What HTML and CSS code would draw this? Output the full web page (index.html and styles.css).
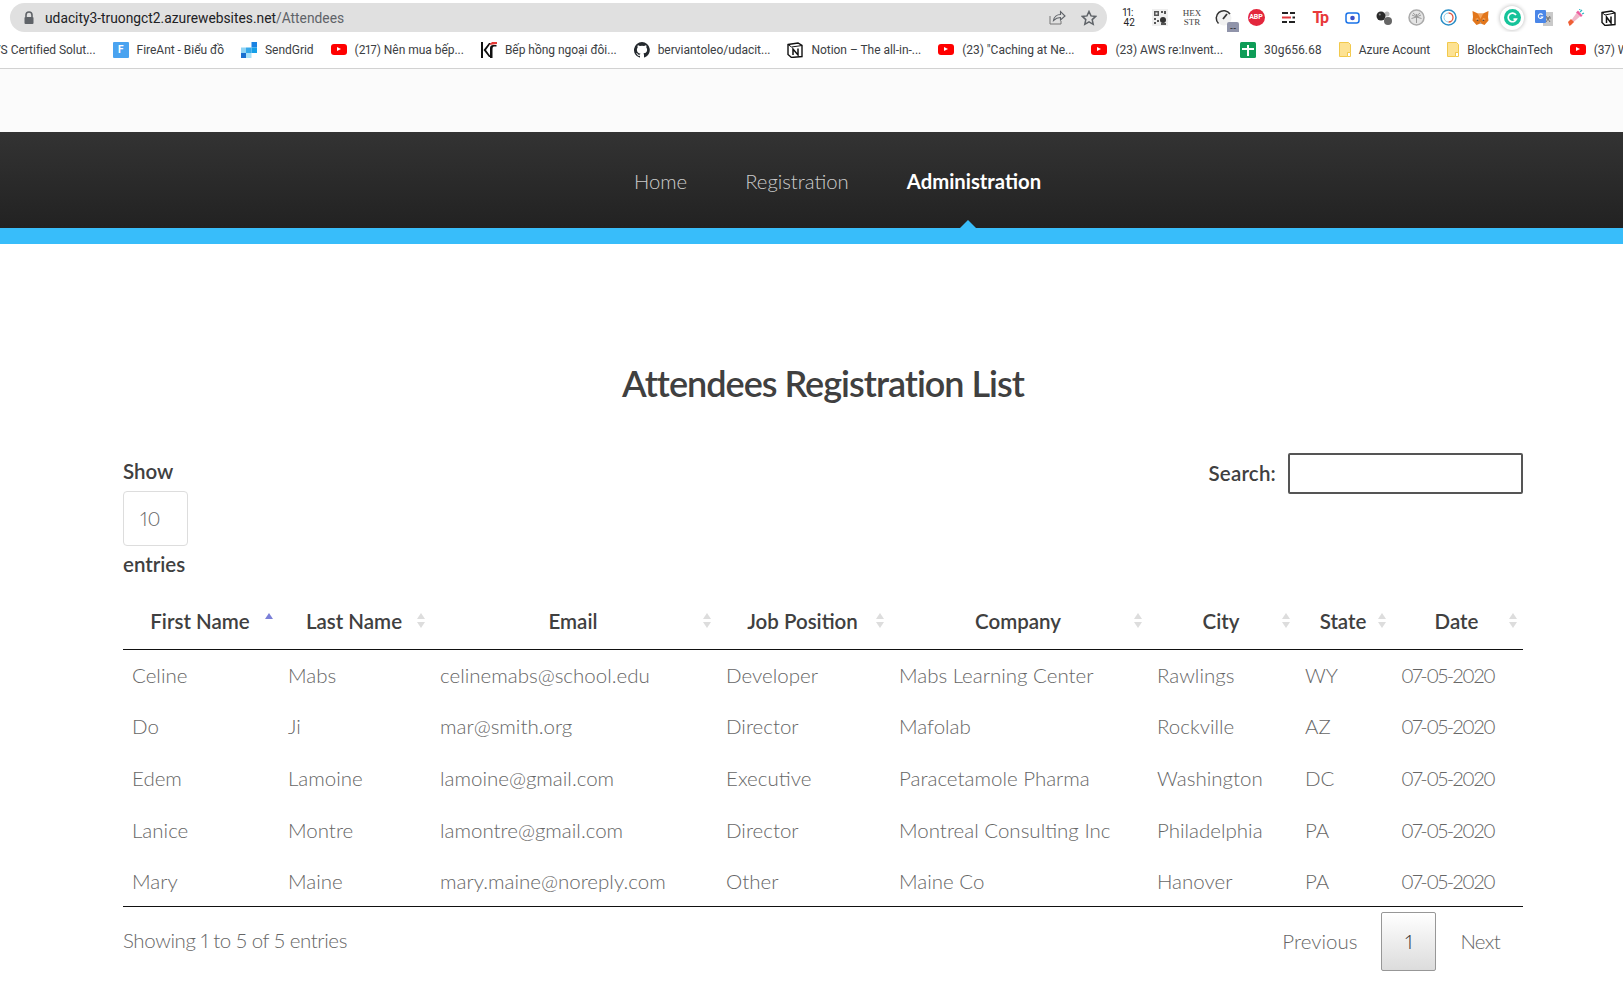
FILE: index.html
```html
<!DOCTYPE html>
<html lang="en">
<head>
    <meta charset="UTF-8">
    <title>Attendees</title>
    <link rel="stylesheet" href="styles.css">
</head>
<body>

    <div class="address-row">
        <div class="address-bar">
            <svg class="lock" width="12" height="14" viewBox="0 0 12 14"><path d="M3 6V4a3 3 0 0 1 6 0v2" fill="none" stroke="#5f6368" stroke-width="1.6"/><rect x="1.5" y="6" width="9" height="7" rx="1" fill="#5f6368"/></svg>
            <span class="url">udacity3-truongct2.azurewebsites.net<span class="url-path">/Attendees</span></span>
            <svg class="bar-icon" width="17" height="15" viewBox="0 0 17 15"><path d="M1 6v8h11v-3" fill="none" stroke="#777" stroke-width="1"/><path d="M4.500 10.500c.5-3.500 3.500-6 7-6V1.500l4.500 4.500-4.500 4V7.500c-3 0-5 1-7 3z" fill="none" stroke="#5f6368" stroke-width="1.100"/></svg>
            <svg class="bar-icon" width="16" height="16" viewBox="0 0 16 16"><path d="M8 1.500l2 4.400 4.700.5-3.500 3.200 1 4.700L8 11.900l-4.200 2.400 1-4.700-3.500-3.200 4.700-.5z" fill="none" stroke="#5f6368" stroke-width="1.500"/></svg>
        </div>
        <div class="extensions">
            <span class="ext-clock">11:<br>&nbsp;42</span>
            <svg width="16" height="17" viewBox="0 0 16 17"><rect width="16" height="17" fill="#efefef"/><path d="M2 2h5v5H2zM3.500 3.500v2h2v-2zM9 2h2v2H9zM12 2h2v3h-2zM2 9h2v2H2zM5 11h2v2H5zM2 13h2v2H2z" fill="#555" fill-rule="evenodd"/><circle cx="11" cy="11" r="3" fill="#333"/><path d="M9 14h5v2H9z" fill="#555"/></svg>
            <span class="ext-hex">HEX<br>STR</span>
            <span class="ext-gauge">
                <svg width="18" height="18" viewBox="0 0 18 18"><circle cx="9" cy="9" r="7.500" fill="#f1f1f1"/><path d="M3.500 14.500A7.500 7.500 0 1 1 15 5" fill="none" stroke="#333" stroke-width="1.500"/><path d="M8 10l4-5" stroke="#333" stroke-width="1.800"/></svg>
                <span class="gauge-badge">--</span>
            </span>
            <span class="ext-abp">ABP</span>
            <svg width="13" height="11" viewBox="0 0 13 11"><path d="M0 1h6M8 1h5M0 10h5M7 10h6" stroke="#222" stroke-width="2"/><path d="M0 5.500h9" stroke="#e0383e" stroke-width="2"/><path d="M10.500 5.500H13" stroke="#222" stroke-width="2"/></svg>
            <span class="ext-tp">Tp</span>
            <svg width="15" height="12" viewBox="0 0 15 12"><rect x="1" y="1" width="13" height="10" rx="2.500" fill="none" stroke="#1a73e8" stroke-width="1.500"/><circle cx="7.500" cy="6" r="2.300" fill="#3b50c8"/></svg>
            <svg width="16" height="16" viewBox="0 0 16 16"><circle cx="11" cy="4" r="2.500" fill="#bbb"/><circle cx="12" cy="11" r="4" fill="#666"/><circle cx="5" cy="6" r="4.500" fill="#2a2a2a"/><circle cx="3.800" cy="4.500" r="1" fill="#888"/></svg>
            <svg width="17" height="17" viewBox="0 0 17 17"><circle cx="8.500" cy="8.500" r="7.500" fill="#e4e4e4" stroke="#aaa" stroke-width="1.500"/><path d="M8.500 5v9M4 6l4.500 2L13 6M3.500 9.500l5-1.500 5 1.500M5 4l3.500 3L12 4" fill="none" stroke="#999"/></svg>
            <svg width="17" height="17" viewBox="0 0 17 17"><circle cx="8.500" cy="8.500" r="7.500" fill="none" stroke="#2a8fc7" stroke-width="1.500"/><path d="M8.500 4a4.500 4.500 0 0 1 0 9" fill="none" stroke="#e0533d" stroke-width="1.300"/><path d="M8.500 13a4.500 4.500 0 0 1 0-9" fill="none" stroke="#8ccbea" stroke-width="1"/></svg>
            <svg width="17" height="16" viewBox="0 0 17 16"><path d="M.5 1L6 3.500h5L16.500 1 16 7l.5 3.500L12.500 15l-2.500-1H7l-2.500 1L.5 10.500 1 7z" fill="#e2761b"/><path d="M6 4h5L8.500 9zM3 9l3-1 1 3zM14 9l-3-1-1 3z" fill="#f6a45a"/><path d="M6 9.500L4.500 10.500 6.500 11zM11 9.500l1.500 1-2 .5z" fill="#233447"/><path d="M7 14l1.500-2 1.500 2z" fill="#c0ad9e"/></svg>
            <span class="ext-grammarly">
                <svg width="17" height="17" viewBox="0 0 17 17"><circle cx="8.500" cy="8.500" r="8.500" fill="#15c39a"/><path d="M12 6a4.300 4.300 0 1 0 .4 4.200H9.500" fill="none" stroke="#fff" stroke-width="1.700"/></svg>
            </span>
            <svg width="18" height="18" viewBox="0 0 18 18"><path d="M8 3h10v14H8z" fill="#c9c9c9"/><path d="M11 7l4 6M15 7l-4 6M10 9h6" stroke="#777"/><rect y="1" width="11" height="13" rx="1" fill="#4a86e8"/><path d="M7.500 5.800a2.300 2.300 0 1 0 .3 2.200H5.500" fill="none" stroke="#fff" stroke-width="1.100"/></svg>
            <svg width="18" height="18" viewBox="0 0 18 18"><path d="M2 15l4-1.500 7-6-3.500-3.500-5 7z" fill="#f0b7c9"/><path d="M1 13l3-3 3 3-3 3-1.500 1z" fill="#ef5f35"/><path d="M9 3.500l5 4.500 1.500-1.500L11 1.500z" fill="#ee5f9f"/><path d="M13 3l2-2M15 5l2-1M12.500 1l.5-1" stroke="#2fb7c4" stroke-width="1.300"/></svg>
            <svg width="15" height="16" viewBox="0 0 15 16"><path d="M1 2.500L10.500 1 14 3v11.500L4 15.500 1 12.500z" fill="#fff" stroke="#111" stroke-width="1.400"/><path d="M1 2.500l3 2.500 10-2" fill="none" stroke="#111"/><path d="M5.500 13V7l4.500 6V6.500" fill="none" stroke="#111" stroke-width="1.500"/></svg>
        </div>
    </div>

    <div class="bookmarks">
        <span class="bookmark cut-first">VS Certified Solut...</span>
        <span class="bookmark"><span class="bm-fireant">F</span>FireAnt - Biểu đồ</span>
        <span class="bookmark"><svg width="16" height="16" viewBox="0 0 16 16"><path d="M10.500 0H16v5.500h-5.500z" fill="#1a82e2"/><path d="M5 5.500h5.500V11H5z" fill="#35a8ea"/><path d="M10.500 5.500H16V11h-5.500z" fill="#16a0e8"/><path d="M0 5.500h5V11H0z" fill="#8fd3f4"/><path d="M0 11h5v5H0z" fill="#1a6fd0"/><path d="M5 11h5.500v5H5z" fill="#a8e0f7"/></svg>SendGrid</span>
        <span class="bookmark"><span class="bm-youtube"></span>(217) Nên mua bếp...</span>
        <span class="bookmark"><svg width="16" height="16" viewBox="0 0 16 16"><path d="M0 0h2v16H0z" fill="#111"/><path d="M2.500 8L8 1h2L5 8l5 7H8z" fill="#111"/><path d="M9 6c0-2 1.500-3 3-3h3.500v1.500H13c-1 0-1.500 1-1.500 2.500v9H9z" fill="#111"/><path d="M8 3l3-3h5v2l-4 .5z" fill="#e53935"/></svg>Bếp hồng ngoại đôi...</span>
        <span class="bookmark"><svg width="16" height="16" viewBox="0 0 16 16"><path d="M8 0a8 8 0 0 0-2.500 15.600c.4.100.5-.2.500-.4v-1.400c-2.200.5-2.700-1-2.700-1-.4-.9-.9-1.200-.9-1.200-.7-.5.100-.5.100-.5.800.1 1.200.8 1.200.8.700 1.200 1.900.9 2.300.7.100-.5.300-.9.500-1.100-1.800-.2-3.600-.9-3.600-4 0-.9.300-1.600.8-2.100-.1-.2-.4-1 .1-2.100 0 0 .7-.2 2.200.8a7.500 7.500 0 0 1 4 0c1.500-1 2.200-.8 2.200-.8.400 1.100.2 1.900.1 2.100.5.600.8 1.300.8 2.100 0 3.100-1.900 3.700-3.700 3.900.3.300.6.800.6 1.500v2.200c0 .2.100.5.600.4A8 8 0 0 0 8 0z" fill="#24292e"/></svg>berviantoleo/udacit...</span>
        <span class="bookmark"><svg width="16" height="16" viewBox="0 0 16 16"><path d="M1 2.500L11 1l4 2.500v11L4.500 15.500 1 12.500z" fill="#fff" stroke="#111" stroke-width="1.400"/><path d="M1 2.500l3.500 2.500L15 3.500" fill="none" stroke="#111"/><path d="M6 13V7l5 6V6.500" fill="none" stroke="#111" stroke-width="1.500"/></svg>Notion – The all-in-...</span>
        <span class="bookmark"><span class="bm-youtube"></span>(23) "Caching at Ne...</span>
        <span class="bookmark"><span class="bm-youtube"></span>(23) AWS re:Invent...</span>
        <span class="bookmark"><svg width="16" height="16" viewBox="0 0 16 16"><rect width="16" height="16" rx="1.500" fill="#0f9d58"/><path d="M7 3h2v3h5v2H9v6H7V8H2V6h5z" fill="#fff"/></svg>30g656.68</span>
        <span class="bookmark"><svg class="bm-file" width="12" height="15" viewBox="0 0 12 15"><path d="M.5.500h9l2 2v8h-3v4H.5z" fill="#fde293" stroke="#f2c94c"/><path d="M8.500 10.500h3v4h-3z" fill="#fff" stroke="#f2c94c"/></svg>Azure Acount</span>
        <span class="bookmark"><svg class="bm-file" width="12" height="15" viewBox="0 0 12 15"><path d="M.5.500h9l2 2v8h-3v4H.5z" fill="#fde293" stroke="#f2c94c"/><path d="M8.500 10.500h3v4h-3z" fill="#fff" stroke="#f2c94c"/></svg>BlockChainTech</span>
        <span class="bookmark"><span class="bm-youtube"></span>(37) W</span>
    </div>

    <div class="top-band"></div>

    <nav class="main-nav">
        <a href="#">Home</a>
        <a href="#">Registration</a>
        <a href="#" class="active">Administration</a>
    </nav>
    <div class="nav-stripe"></div>

    <main class="content">
        <h1>Attendees Registration List</h1>

        <div class="table-tools">
            <div class="length-box">
                <div>Show</div>
                <div class="length-select">10</div>
                <div>entries</div>
            </div>
            <div class="search-box">
                <label for="search">Search:</label>
                <input id="search" type="text">
            </div>
        </div>

        <table class="attendees">
            <colgroup>
                <col class="c-first"><col class="c-last"><col class="c-email"><col class="c-job">
                <col class="c-company"><col class="c-city"><col class="c-state"><col class="c-date">
            </colgroup>
            <thead>
                <tr>
                    <th class="sorted">First Name</th>
                    <th>Last Name</th>
                    <th>Email</th>
                    <th>Job Position</th>
                    <th>Company</th>
                    <th>City</th>
                    <th>State</th>
                    <th>Date</th>
                </tr>
            </thead>
            <tbody>
                <tr><td>Celine</td><td>Mabs</td><td>celinemabs@school.edu</td><td>Developer</td><td>Mabs Learning Center</td><td>Rawlings</td><td>WY</td><td class="date">07-05-2020</td></tr>
                <tr><td>Do</td><td>Ji</td><td>mar@smith.org</td><td>Director</td><td>Mafolab</td><td>Rockville</td><td>AZ</td><td class="date">07-05-2020</td></tr>
                <tr><td>Edem</td><td>Lamoine</td><td>lamoine@gmail.com</td><td>Executive</td><td>Paracetamole Pharma</td><td>Washington</td><td>DC</td><td class="date">07-05-2020</td></tr>
                <tr><td>Lanice</td><td>Montre</td><td>lamontre@gmail.com</td><td>Director</td><td>Montreal Consulting Inc</td><td>Philadelphia</td><td>PA</td><td class="date">07-05-2020</td></tr>
                <tr><td>Mary</td><td>Maine</td><td>mary.maine@noreply.com</td><td>Other</td><td>Maine Co</td><td>Hanover</td><td>PA</td><td class="date">07-05-2020</td></tr>
            </tbody>
        </table>

        <div class="table-footer">
            <div class="table-info">Showing 1 to 5 of 5 entries</div>
            <div class="pager">
                <a href="#">Previous</a>
                <a href="#" class="current">1</a>
                <a href="#" class="next">Next</a>
            </div>
        </div>
    </main>

</body>
</html>
```

FILE: styles.css
```css
* {
    box-sizing: border-box;
}

body {
    margin: 0;
    font-family: 'Lato', sans-serif;
    font-variant-numeric: proportional-nums;
    background-color: white;
    color: #666;
    overflow: hidden;
}

/* Browser chrome */
.address-row {
    height: 35px;
    padding-top: 3px;
    display: flex;
}

.address-bar {
    width: 1097px;
    height: 29px;
    margin-left: 10px;
    padding: 0 10px 0 13px;
    border-radius: 15px;
    background-color: #e0e0e0;
    display: flex;
    align-items: center;
    gap: 15px;
    font-family: 'Roboto', sans-serif;
    font-size: 13.8px;
    color: #202124;
}

.url {
    flex: 1;
    margin-left: -5px;
}

.url-path {
    color: #5f6368;
}

.extensions {
    flex: 1;
    height: 29px;
    padding-left: 5px;
    display: grid;
    grid-template-columns: repeat(16, 32px);
    justify-items: center;
    align-items: center;
    overflow: hidden;
}

.ext-clock,
.ext-hex {
    font-family: 'Liberation Serif', serif;
    font-size: 9px;
    line-height: 9px;
    text-align: center;
    color: #444;
}

.ext-clock {
    font-family: 'Roboto', sans-serif;
    font-size: 10px;
    line-height: 10px;
    color: #222;
}

.ext-gauge {
    position: relative;
    display: flex;
}

.gauge-badge {
    position: absolute;
    right: -6px;
    bottom: -7px;
    width: 12px;
    height: 12px;
    background-color: #9094aa;
    border-radius: 2px;
    color: #222;
    font-size: 9px;
    line-height: 11px;
    text-align: center;
}

.ext-abp {
    width: 17px;
    height: 17px;
    border-radius: 50%;
    background-color: #e3263c;
    color: white;
    font: bold 7px/17px 'Roboto', sans-serif;
    text-align: center;
}

.ext-tp {
    color: #e83a3a;
    font: bold 16px/16px 'Roboto', sans-serif;
    letter-spacing: -1.500px;
}

.ext-grammarly {
    width: 24px;
    height: 24px;
    display: flex;
    align-items: center;
    justify-content: center;
    background-color: white;
    border-radius: 50%;
    box-shadow: 0 0 4px rgba(0, 0, 0, 0.3);
}

.bookmarks {
    height: 34px;
    padding-bottom: 4px;
    border-bottom: 1px solid #d2d2d2;
    display: flex;
    align-items: center;
    gap: 17px;
    overflow: hidden;
    white-space: nowrap;
    font-family: 'Roboto', sans-serif;
    font-size: 12px;
    letter-spacing: -0.03px;
    color: #3c4043;
}

.bookmark {
    display: flex;
    align-items: center;
    gap: 8px;
    flex-shrink: 0;
}

.cut-first {
    margin-left: -7px;
}

.bm-fireant {
    width: 16px;
    height: 16px;
    border-radius: 1px;
    background-color: #4aa3f0;
    color: white;
    font-weight: bold;
    font-size: 10px;
    line-height: 16px;
    text-align: center;
}

.bm-youtube {
    width: 16px;
    height: 11px;
    border-radius: 3px;
    background-color: #f00;
    position: relative;
}

.bm-youtube::after {
    content: '';
    position: absolute;
    left: 6px;
    top: 3px;
    border-left: 4px solid white;
    border-top: 2.500px solid transparent;
    border-bottom: 2.500px solid transparent;
}

/* Site header */
.top-band {
    height: 63px;
    background-color: #fbfbfb;
}

.main-nav {
    height: 96px;
    background-image: linear-gradient(#333, #222);
    display: flex;
    justify-content: center;
    align-items: center;
    gap: 58px;
    font-size: 20.300px;
    padding: 2px 0 0 52px;
}

.main-nav a {
    position: relative;
    color: #ccc;
    font-weight: 300;
    text-decoration: none;
}

.main-nav a.active {
    color: white;
    font-weight: 700;
}

.main-nav a.active::after {
    content: '';
    position: absolute;
    left: 50%;
    bottom: -35px;
    margin-left: -14px;
    border-left: 8px solid transparent;
    border-right: 8px solid transparent;
    border-bottom: 8px solid #38bdfa;
}

.nav-stripe {
    height: 16px;
    background-color: #38bdfa;
}

/* Page content */
.content {
    padding: 0 100px 0 123px;
}

h1 {
    margin: 115px 0 47px;
    text-align: center;
    font-size: 36px;
    line-height: 48px;
    font-weight: 600;
    letter-spacing: -1px;
    color: #404040;
}

.table-tools {
    display: flex;
    justify-content: space-between;
    align-items: flex-start;
    height: 139px;
    font-size: 20.500px;
    font-weight: 600;
    color: #404040;
}

.length-box {
    line-height: 34px;
}

.length-select {
    width: 65px;
    height: 55px;
    margin: 3px 0 1px;
    border: 1px solid #ddd;
    border-radius: 4px;
    padding-left: 16px;
    font-size: 20px;
    line-height: 53px;
    font-weight: 300;
    color: #666;
}

.search-box {
    display: flex;
    align-items: center;
    gap: 12px;
    margin-top: -1px;
}

.search-box label {
    margin-bottom: 1px;
    letter-spacing: 0.2px;
}

.search-box input {
    width: 235px;
    height: 41px;
    border: 2px solid #555;
    border-radius: 2px;
    background-color: white;
}

/* Table */
.attendees {
    width: 1400px;
    table-layout: fixed;
    border-collapse: collapse;
    border-bottom: 1.500px solid #111;
    font-size: 20.500px;
}

.c-first { width: 156px; }
.c-last { width: 152px; }
.c-email { width: 286px; }
.c-job { width: 173px; }
.c-company { width: 258px; }
.c-city { width: 148px; }
.c-state { width: 96px; }
.c-date { width: 131px; }

.attendees th {
    height: 56px;
    padding: 0 12px 0 10px;
    border-bottom: 1.500px solid #111;
    color: #404040;
    font-weight: 600;
    text-align: center;
    position: relative;
}

.attendees th::before,
.attendees th::after {
    content: '';
    position: absolute;
    right: 6px;
    border-left: 4px solid transparent;
    border-right: 4px solid transparent;
}

.attendees th::before {
    top: 20px;
    border-bottom: 6px solid #ddd;
}

.attendees th::after {
    top: 29px;
    border-top: 6px solid #ddd;
}

.attendees th.sorted::before {
    border-bottom-color: #7b80d8;
}

.attendees th.sorted::after {
    display: none;
}

.attendees td {
    height: 51.600px;
    padding: 0 9px;
    font-weight: 300;
    white-space: nowrap;
}

.attendees td.date {
    font-size: 20px;
    letter-spacing: -1.600px;
}

.table-footer {
    display: flex;
    justify-content: space-between;
    align-items: flex-start;
    padding-top: 5px;
    font-size: 20.500px;
    font-weight: 300;
}

.table-info {
    padding-top: 16px;
    letter-spacing: -0.400px;
}

.pager {
    display: flex;
    align-items: center;
}

.pager a {
    padding: 0 24px 2px;
    color: #666;
    text-decoration: none;
}

.pager a.next {
    padding: 0 23px 2px 24px;
    letter-spacing: -0.700px;
}

.pager a.current {
    width: 55px;
    height: 59px;
    padding: 0;
    border: 1px solid #979797;
    border-radius: 2px;
    background-image: linear-gradient(white, #dcdcdc);
    color: #333;
    line-height: 57px;
    text-align: center;
}
```
